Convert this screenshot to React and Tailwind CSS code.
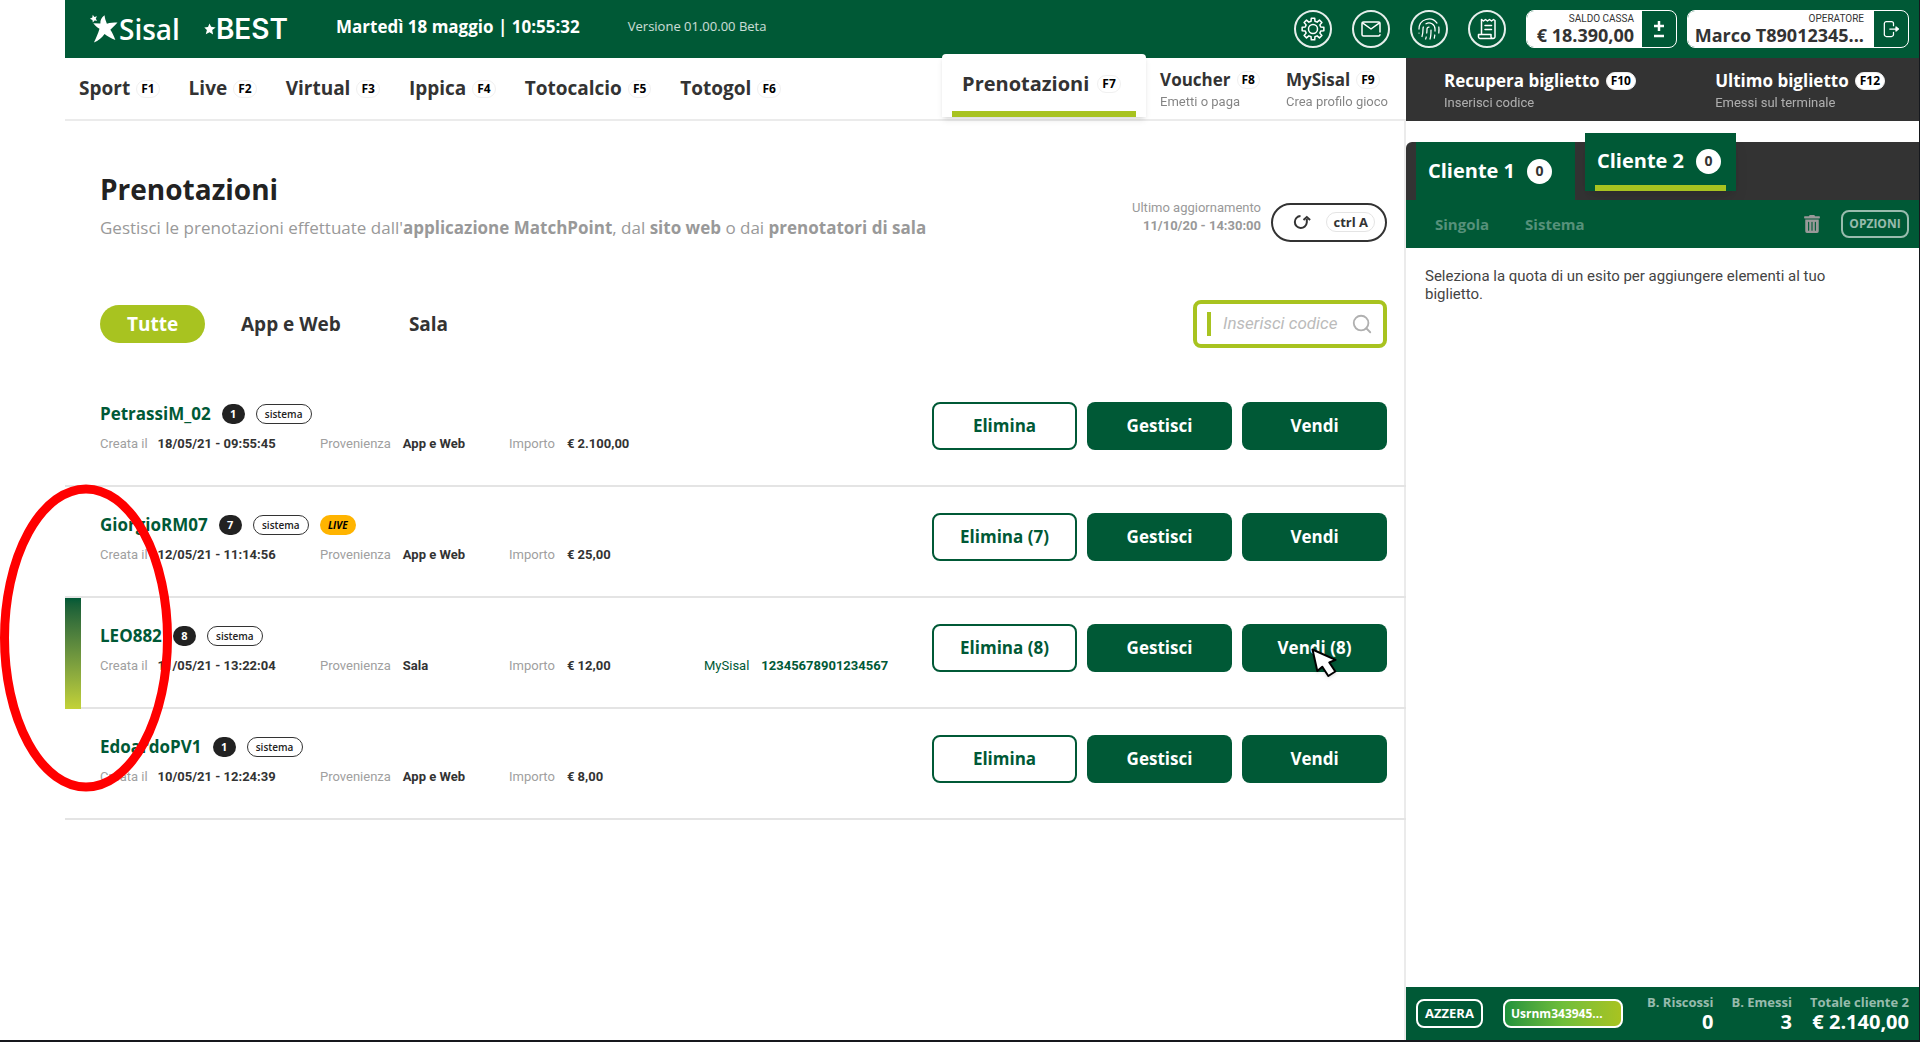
import { Fingerprint, Search } from "lucide-react";
import { FaTrashAlt } from "react-icons/fa";

const navItems = [
  { label: "Sport", hotkey: "F1" },
  { label: "Live", hotkey: "F2" },
  { label: "Virtual", hotkey: "F3" },
  { label: "Ippica", hotkey: "F4" },
  { label: "Totocalcio", hotkey: "F5" },
  { label: "Totogol", hotkey: "F6" },
];

const bookings = [
  { name: "PetrassiM_02", count: 1, created: "18/05/21 - 09:55:45", source: "App e Web", amount: "€ 2.100,00", remove: "Elimina", sell: "Vendi" },
  { name: "GiorgioRM07", count: 7, live: true, created: "12/05/21 - 11:14:56", source: "App e Web", amount: "€ 25,00", remove: "Elimina (7)", sell: "Vendi" },
  { name: "LEO882", count: 8, created: "11/05/21 - 13:22:04", source: "Sala", amount: "€ 12,00", mySisal: "12345678901234567", remove: "Elimina (8)", sell: "Vendi (8)", selected: true },
  { name: "EdoardoPV1", count: 1, created: "10/05/21 - 12:24:39", source: "App e Web", amount: "€ 8,00", remove: "Elimina", sell: "Vendi" },
];

//outline of an 8 tooth gear centred on 12,12
const gearPoints = Array.from({ length: 8 }, (_, i) =>
  [[-14, 8], [-9, 11], [9, 11], [14, 8]].map(([deg, r]) => {
    const a = ((i * 45 + deg) * Math.PI) / 180;
    return `${(12 + r * Math.sin(a)).toFixed(2)},${(12 - r * Math.cos(a)).toFixed(2)}`;
  })
)
  .flat()
  .join(" ");

function LineIcon({ children, className = "h-6 w-6" }) {
  return (
    <svg viewBox="0 0 24 24" className={className} fill="none" stroke="currentColor" strokeWidth="1.500" strokeLinejoin="round" strokeLinecap="round" aria-hidden="true">
      {children}
    </svg>
  );
}

function GearIcon() {
  return (
    <LineIcon>
      <polygon points={gearPoints} />
      <circle cx="12" cy="12" r="4.500" />
    </LineIcon>
  );
}

function MailIcon() {
  return (
    <LineIcon>
      <path d="M21 15V6.500a1.500 1.500 0 0 0-1.500-1.500h-15A1.500 1.500 0 0 0 3 6.500v11A1.500 1.500 0 0 0 4.500 19h15a1.500 1.500 0 0 0 1.500-1.300" />
      <path d="M3.500 5.800 12 12l8.500-6.200" />
    </LineIcon>
  );
}

function ReceiptIcon() {
  return (
    <LineIcon>
      <path d="M6.500 17V2.500l2 1.500 2-1.500 2 1.500 2-1.500 2 1.500 2-1.500 1.500 1V19a2 2 0 0 1-2 2.500H5A2 2 0 0 1 3.500 19v-1.500H16V19a2 2 0 0 0 2 2.500" />
      <path d="M10 8.500h6.500M10 12.500h6.500" />
    </LineIcon>
  );
}

const tools = [
  { label: "Impostazioni", icon: <GearIcon /> },
  { label: "Messaggi", icon: <MailIcon /> },
  { label: "Impronta", icon: <Fingerprint size={24} strokeWidth={1.25} /> },
  { label: "Scontrini", icon: <ReceiptIcon /> },
];

function Hotkey({ children }) {
  return (
    <span className="rounded-full border border-[#f0f0f0] bg-white px-1 text-xs leading-4 font-bold text-black">
      {children}
    </span>
  );
}

function Logo() {
  return (
    <div className="flex items-center text-white">
      <svg viewBox="0 0 28 28" className="h-[30px] w-[30px]" fill="currentColor" aria-hidden="true">
        <path d="M14.500 1.200c-3 2-4 4.600-3.900 7.600L4 8.700c1.900 2.400 3.600 3.900 5.800 5.100-1.300 4.400-3 8.400-5.200 12.900 4.200-2 7.300-4.600 9.900-8.100 3 2.200 6.100 4.200 10.100 5.600-1.500-3.800-2.700-6.500-4.700-9.500 2.400-2 4.400-4 6.700-6.700-3.800 0-6.700.3-9.900 1-1-2.500-1.900-4.800-2.200-7.800z" />
        <path d="M3.500.800l1.500 1.900 2.400-.5-1.100 2.200 1.300 2-2.400-.3-1.600 1.800-.4-2.400L.9 4.400l2.200-1.100z" />
      </svg>
      <span className="text-[28px] leading-7 font-semibold">Sisal</span>
      <svg viewBox="0 0 12 12" className="ml-6 h-3 w-3" fill="currentColor" aria-hidden="true">
        <path d="M5.500.500l1.600 3.300 4.600.6-3.500 2.600.9 4.500-3.600-2.300-3.700 2 1.100-4.100L.3 4.400l3.700-.4z" />
      </svg>
      <span className="font-['Inter',sans-serif] text-[28px] leading-7 font-semibold">BEST</span>
    </div>
  );
}

function TopBar() {
  return (
    <header className="flex h-[58px] items-center bg-[#005936] pr-2.5 pl-6 text-white">
      <Logo />
      <p className="ml-12 pb-1 text-[17px] font-bold">Martedì 18 maggio | 10:55:32</p>
      <p className="ml-12 pb-1 text-[13px] text-white/80">Versione 01.00.00 Beta</p>

      <div className="ml-auto flex gap-5">
        {tools.map(({ label, icon }) => (
          <button key={label} aria-label={label} className="flex h-[38px] w-[38px] items-center justify-center rounded-full border-2 border-white/90">
            {icon}
          </button>
        ))}
      </div>

      <div className="ml-5 flex h-[38px] overflow-hidden rounded-lg border border-white">
        <div className="flex w-[115px] flex-col items-end bg-white pr-2 text-[#333]">
          <span className="pt-0.5 font-['Roboto',sans-serif] text-[10px] leading-3">SALDO CASSA</span>
          <span className="text-lg leading-5 font-bold">€ 18.390,00</span>
        </div>
        <button aria-label="Movimenti cassa" className="flex w-[34px] items-center justify-center">
          <svg viewBox="0 0 12 18" className="h-[18px] w-3" stroke="currentColor" strokeWidth="2.500" aria-hidden="true">
            <path d="M6 1v10M1 6h10M1 16h10" />
          </svg>
        </button>
      </div>

      <div className="ml-2.5 flex h-[38px] overflow-hidden rounded-lg border border-white">
        <div className="flex w-[186px] flex-col items-end bg-white pr-2.5 text-[#333]">
          <span className="pt-0.5 font-['Roboto',sans-serif] text-[10px] leading-3">OPERATORE</span>
          <span className="text-lg leading-5 font-bold">Marco T89012345...</span>
        </div>
        <button aria-label="Esci" className="flex w-[34px] items-center justify-center">
          <LineIcon className="h-5 w-5">
            <path d="M15 8V5.500A2.500 2.500 0 0 0 12.500 3h-6A2.500 2.500 0 0 0 4 5.500v13A2.500 2.500 0 0 0 6.500 21h6a2.500 2.500 0 0 0 2.500-2.500V16" />
            <path d="M10.500 12H21M18 9.500l3 2.500-3 2.500z" />
          </LineIcon>
        </button>
      </div>
    </header>
  );
}

function SubLink({ label, hotkey, hint }) {
  return (
    <a href="#" className="flex flex-col gap-1 pt-0.5">
      <span className="flex items-center gap-1.5 text-[17px] leading-5 font-bold">
        {label}
        <Hotkey>{hotkey}</Hotkey>
      </span>
      <span className="font-['Roboto',sans-serif] text-[13px] leading-4 opacity-60">{hint}</span>
    </a>
  );
}

function Nav() {
  return (
    <nav className="flex h-[63px] text-[#333]">
      <div className="flex flex-1 items-center border-b-2 border-[#ebebeb] pr-[18px] pl-3.5">
        <div className="flex items-center gap-[29px]">
          {navItems.map((item) => (
            <a key={item.label} href="#" className="flex items-center gap-1.5 text-[19px] font-bold">
              {item.label}
              <Hotkey>{item.hotkey}</Hotkey>
            </a>
          ))}
        </div>
        {/* active tab pokes out over the green bar */}
        <a href="#" aria-current="page" className="z-10 mr-3.5 -mt-1.5 ml-auto flex h-[63px] w-[204px] flex-col rounded-t-sm bg-white px-2.5 shadow-md">
          <span className="flex flex-1 items-center gap-2 px-2.5 pt-0.5 text-xl font-bold">
            Prenotazioni
            <Hotkey>F7</Hotkey>
          </span>
          <span className="h-1.5 bg-[#a8c320]" />
        </a>
        <div className="flex gap-[26px]">
          <SubLink label="Voucher" hotkey="F8" hint="Emetti o paga" />
          <SubLink label="MySisal" hotkey="F9" hint="Crea profilo gioco" />
        </div>
      </div>
      <div className="flex w-[513px] items-center justify-between bg-[#333] pr-[34px] pl-[38px] text-white">
        <SubLink label="Recupera biglietto" hotkey="F10" hint="Inserisci codice" />
        <SubLink label="Ultimo biglietto" hotkey="F12" hint="Emessi sul terminale" />
      </div>
    </nav>
  );
}

function Field({ label, value, className }) {
  return (
    <div className={className}>
      <dt className="text-[#a0a0a0]">{label}</dt>
      <dd className="font-bold">{value}</dd>
    </div>
  );
}

function Booking({ booking }) {
  return (
    <li className="relative flex h-[111px] items-start border-b-2 border-[#e4e4e4] pt-[26px] pr-[19px] pl-[35px]">
      {booking.selected && (
        <span className="absolute top-0 left-0 h-[111px] w-4 bg-linear-to-b from-[#005936] to-[#c3d237]" />
      )}
      <div className="flex-1">
        <div className="flex h-6 items-center gap-[11px]">
          <h2 className="text-[17px] font-bold text-[#005936]">{booking.name}</h2>
          <span className="flex h-5 w-[23px] items-center justify-center rounded-full bg-[#222] text-[11px] font-bold text-white">{booking.count}</span>
          <span className="flex h-5 w-14 items-center justify-center rounded-full border border-[#333] text-[10px] font-semibold text-[#222]">sistema</span>
          {booking.live && (
            <span className="flex h-5 w-9 items-center justify-center rounded-full bg-[#ffb400] text-[10px] font-bold text-black italic">LIVE</span>
          )}
        </div>
        <dl className="mt-2 flex font-['Roboto',sans-serif] text-[13px] leading-5 text-[#333]">
          <Field label="Creata il" value={booking.created} className="flex w-[220px] gap-2.5" />
          <Field label="Provenienza" value={booking.source} className="flex w-[189px] gap-3" />
          <Field label="Importo" value={booking.amount} className="flex w-[195px] gap-3" />
          {booking.mySisal && (
            <div className="flex gap-3 text-[#005936]">
              <dt>MySisal</dt>
              <dd className="font-bold">{booking.mySisal}</dd>
            </div>
          )}
        </dl>
      </div>
      <div className="flex gap-2.5 text-[17px] font-bold">
        <button className="h-12 w-[145px] rounded-lg border-2 border-[#005936] text-[#005936]">{booking.remove}</button>
        <button className="h-12 w-[145px] rounded-lg bg-[#005936] text-white">Gestisci</button>
        <button className="relative h-12 w-[145px] rounded-lg bg-[#005936] text-white">
          {booking.sell}
          {booking.selected && (
            <svg viewBox="0 0 28 30" className="absolute top-6 left-[69px] h-[30px] w-7 drop-shadow" fill="white" stroke="black" strokeWidth="2" strokeLinejoin="round" aria-hidden="true">
              <path d="M1.500 1.500l4.800 21.500 5-4.300 6 9.300 7-4.500-6-9 6.200-2.700z" />
            </svg>
          )}
        </button>
      </div>
      {booking.selected && (
        <svg viewBox="0 0 172 308" className="pointer-events-none absolute -top-[114px] -left-[65px] z-10 h-[308px] w-[172px]" fill="none" stroke="#ff0000" strokeWidth="9" aria-hidden="true">
          <ellipse cx="86" cy="154" rx="81.500" ry="149" />
        </svg>
      )}
    </li>
  );
}

function Bookings() {
  return (
    <main className="flex-1 border-r-2 border-[#ebebeb]">
      <div className="flex items-start justify-between pt-[50px] pr-[17px] pl-[35px]">
        <div>
          <h1 className="text-[28px] leading-9 font-bold text-[#222]">Prenotazioni</h1>
          <p className="mt-[9px] text-[17px] leading-6 text-[#999]">
            Gestisci le prenotazioni effettuate dall'<b>applicazione MatchPoint</b>, dal <b>sito web</b> o dai <b>prenotatori di sala</b>
          </p>
        </div>
        <div className="mt-7 flex items-center gap-2.5">
          <p className="pb-2.5 text-right font-['Roboto',sans-serif] text-[13px] leading-[18px] text-[#999]">
            Ultimo aggiornamento
            <br />
            <b>11/10/20 - 14:30:00</b>
          </p>
          <button aria-label="Aggiorna" className="flex h-[39px] w-[116px] items-center justify-between rounded-full border-2 border-[#333] pr-2.5 pl-5 text-[#333]">
            <svg viewBox="0 0 18 16" className="h-4 w-[18px]" fill="none" stroke="currentColor" strokeWidth="2" aria-hidden="true">
              <path d="M7.500 2a6 6 0 1 0 6.300 6.500V5" />
              <path d="M10.500 6l3.300-3 3.300 3" />
            </svg>
            <span className="rounded-full border border-[#e4e4e4] px-1.5 text-[13px] leading-[18px] font-bold">ctrl A</span>
          </button>
        </div>
      </div>

      <div className="mt-[55px] flex items-center justify-between pr-[17px] pl-[35px]">
        <div className="flex items-center text-[19px] font-bold text-[#333]">
          <button className="h-[38px] w-[105px] rounded-full bg-[#a8c320] text-white">Tutte</button>
          <button className="ml-9">App e Web</button>
          <button className="ml-[68px]">Sala</button>
        </div>
        <label className="flex h-12 w-[194px] items-center rounded-lg border-4 border-[#a8c320] pr-2.5 pl-2.5 text-[#b0b0b0]">
          <span className="mr-3 h-6 w-1 shrink-0 bg-[#a8c320]" />
          <input
            aria-label="Codice prenotazione"
            placeholder="Inserisci codice"
            className="w-full min-w-0 font-['Roboto',sans-serif] text-[17px] italic outline-none placeholder:text-[#bbb]"
          />
          <Search size={22} strokeWidth={2} className="shrink-0" />
        </label>
      </div>

      <ul className="mt-7 -mr-0.5">
        {bookings.map((booking) => (
          <Booking key={booking.name} booking={booking} />
        ))}
      </ul>
    </main>
  );
}

function Total({ label, value }) {
  return (
    <div className="flex flex-col items-end font-bold">
      <span className="text-[13px] leading-4 text-white/60">{label}</span>
      <span className="text-xl leading-6 text-white">{value}</span>
    </div>
  );
}

function Ticket() {
  return (
    <aside className="mt-[21px] flex w-[513px] flex-col">
      <div className="flex h-[58px] gap-2.5 rounded-tl-md bg-[#333] pl-2.5 text-xl font-bold text-white">
        <button className="flex w-[159px] items-center gap-3 bg-[#005936] pl-3">
          Cliente 1
          <span className="flex h-[25px] w-[25px] items-center justify-center rounded-full bg-white text-sm text-[#333]">0</span>
        </button>
        <button className="-mt-[9px] flex h-[58px] w-[151px] flex-col bg-[#005936] px-2.5 shadow-lg">
          <span className="flex flex-1 items-center gap-3 px-0.5 pt-1">
            Cliente 2
            <span className="flex h-[25px] w-[25px] items-center justify-center rounded-full bg-white text-sm text-[#333]">0</span>
          </span>
          <span className="h-1.5 w-full bg-[#a8c320]" />
        </button>
      </div>
      <div className="flex h-12 items-center bg-[#005936] pr-2.5 pl-[29px] text-[15px] font-bold text-white/35">
        <button>Singola</button>
        <button className="ml-9">Sistema</button>
        <button aria-label="Svuota" className="ml-auto text-[#999]">
          <FaTrashAlt size={18} />
        </button>
        <button className="ml-5 h-7 w-[68px] rounded-lg border-2 border-white/60 text-xs text-white/60">OPZIONI</button>
      </div>
      <p className="flex-1 pt-[19px] pr-10 pl-[19px] font-['Roboto',sans-serif] text-[15px] leading-[18px] text-[#444]">
        Seleziona la quota di un esito per aggiungere elementi al tuo biglietto.
      </p>
      <footer className="flex h-[53px] items-center bg-[#005936] pr-2.5 pl-2.5 font-bold text-white">
        <button className="h-[29px] w-[67px] rounded-lg border-2 border-white text-[13px]">AZZERA</button>
        <button className="ml-5 h-[29px] w-[120px] rounded-lg border-2 border-white bg-linear-to-r from-[#1f923c] via-[#6fbe3a] to-[#a8c320] pl-1.5 text-left text-xs">Usrnm343945...</button>
        <div className="ml-auto flex gap-[18px]">
          <Total label="B. Riscossi" value="0" />
          <Total label="B. Emessi" value="3" />
          <Total label="Totale cliente 2" value="€ 2.140,00" />
        </div>
      </footer>
    </aside>
  );
}

export default function App() {
  return (
    <div className="flex min-h-screen flex-col border-r border-b-2 border-[#16181d] bg-white pl-[65px] font-['Open_Sans',sans-serif]">
      <TopBar />
      <Nav />
      <div className="flex flex-1">
        <Bookings />
        <Ticket />
      </div>
    </div>
  );
}
